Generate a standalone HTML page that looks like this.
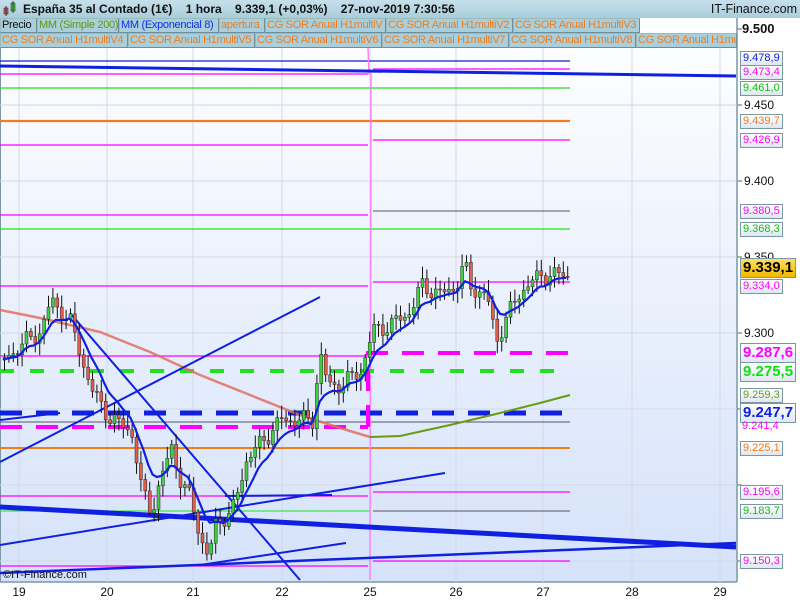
<!DOCTYPE html><html><head><meta charset="utf-8"><style>
*{margin:0;padding:0;box-sizing:border-box}
body{width:800px;height:600px;overflow:hidden;background:#fff;font-family:"Liberation Sans",sans-serif;position:relative}
#hdr{position:absolute;left:0;top:0;width:800px;height:18px;background:linear-gradient(#c6e0ea,#a9cddb);font-size:12px;font-weight:bold;color:#111}
#hdr span{position:absolute;top:2px}
.tab{position:absolute;height:15px;font-size:11px;letter-spacing:-0.3px;color:#f07d1e;background:#a9cfdc;border:1px solid #88a;border-color:#9bb #6d8e9a #6d8e9a #9bb;padding:0 1px;line-height:13px;white-space:nowrap;overflow:hidden}
#ax{position:absolute;left:737px;top:18px;width:63px;height:582px;background:#fff}
.lb{position:absolute;left:740px;font-size:11px;height:15px;line-height:13px;padding:0 2px;border:1px solid #7a97a5;background:linear-gradient(#fff,#dfe8f0)}
.big{font-size:15px;font-weight:bold;height:20px;line-height:18px}
</style></head><body>
<div id="hdr">
<svg style="position:absolute;left:3px;top:1px" width="14" height="16"><rect x="1" y="7" width="4" height="6" fill="#e05050" stroke="#333" stroke-width=".6"/><line x1="3" y1="5" x2="3" y2="15" stroke="#333"/><rect x="8" y="2" width="4" height="8" fill="#40d040" stroke="#333" stroke-width=".6"/><line x1="10" y1="0" x2="10" y2="12" stroke="#333"/></svg>
<span style="left:23px">España 35 al Contado (1€)&nbsp;&nbsp;&nbsp; 1 hora&nbsp;&nbsp;&nbsp; 9.339,1 (+0,03%)&nbsp;&nbsp;&nbsp; 27-nov-2019 7:30:56</span>
<span style="right:3px;font-weight:normal;font-size:12.5px">IT-Finance.com</span>
</div>
<div id="ax"></div>
<svg style="position:absolute;left:0;top:18px" width="800" height="582" viewBox="0 18 800 582">
<defs><linearGradient id="g" x1="0" y1="0" x2="0" y2="1"><stop offset="0" stop-color="#ffffff"/><stop offset="1" stop-color="#d5e2fa"/></linearGradient></defs>
<rect x="0" y="18" width="737" height="564" fill="url(#g)"/>
<line x1="0.5" y1="18" x2="0.5" y2="582" stroke="#7a97a5"/>
<line x1="737" y1="18" x2="737" y2="582" stroke="#7a97a5" stroke-width="1.5"/>
<line x1="0" y1="582" x2="737" y2="582" stroke="#7a97a5" stroke-width="1.5"/>
<g stroke="#d4d8e4" stroke-width="1">
<line x1="0" y1="105" x2="737" y2="105"/><line x1="0" y1="181" x2="737" y2="181"/><line x1="0" y1="257" x2="737" y2="257"/><line x1="0" y1="333" x2="737" y2="333"/><line x1="0" y1="409" x2="737" y2="409"/><line x1="0" y1="485" x2="737" y2="485"/><line x1="0" y1="561" x2="737" y2="561"/>
<line x1="19" y1="48" x2="19" y2="582"/><line x1="107" y1="48" x2="107" y2="582"/><line x1="193" y1="48" x2="193" y2="582"/><line x1="282" y1="48" x2="282" y2="582"/><line x1="370" y1="48" x2="370" y2="582"/><line x1="456" y1="48" x2="456" y2="582"/><line x1="543" y1="48" x2="543" y2="582"/><line x1="632" y1="48" x2="632" y2="582"/><line x1="720" y1="48" x2="720" y2="582"/>
</g>
<g stroke="#666" stroke-width="1">
<line x1="737" y1="29" x2="742" y2="29"/><line x1="737" y1="105" x2="742" y2="105"/><line x1="737" y1="181" x2="742" y2="181"/><line x1="737" y1="257" x2="742" y2="257"/><line x1="737" y1="333" x2="742" y2="333"/><line x1="737" y1="409" x2="742" y2="409"/><line x1="737" y1="485" x2="742" y2="485"/><line x1="737" y1="561" x2="742" y2="561"/>
</g>
<g fill="none">
<line x1="0" y1="61" x2="570" y2="61" stroke="#1020c0" stroke-width="1.3"/>
<line x1="0" y1="74" x2="368" y2="74" stroke="#f0f" stroke-width="1.3"/>
<line x1="373" y1="69" x2="570" y2="69" stroke="#f0f" stroke-width="1.3"/>
<line x1="0" y1="88" x2="570" y2="88" stroke="#20e020" stroke-width="1.3"/>
<line x1="0" y1="121" x2="570" y2="121" stroke="#f07d1e" stroke-width="2.2"/>
<line x1="0" y1="145" x2="368" y2="145" stroke="#f0f" stroke-width="1.3"/>
<line x1="373" y1="140" x2="570" y2="140" stroke="#f0f" stroke-width="1.3"/>
<line x1="0" y1="215" x2="368" y2="215" stroke="#f0f" stroke-width="1.3"/>
<line x1="373" y1="211" x2="570" y2="211" stroke="#556" stroke-width="1"/>
<line x1="0" y1="229" x2="570" y2="229" stroke="#20e020" stroke-width="1.3"/>
<line x1="0" y1="286" x2="368" y2="286" stroke="#f0f" stroke-width="1.3"/>
<line x1="373" y1="282" x2="570" y2="282" stroke="#f0f" stroke-width="1.3"/>
<line x1="0" y1="356" x2="368" y2="356" stroke="#f0f" stroke-width="1.3"/>
<line x1="0" y1="448" x2="570" y2="448" stroke="#f07d1e" stroke-width="2"/>
<line x1="0" y1="496" x2="368" y2="496" stroke="#f0f" stroke-width="1.3"/>
<line x1="373" y1="492" x2="570" y2="492" stroke="#f0f" stroke-width="1.3"/>
<line x1="0" y1="511" x2="370" y2="511" stroke="#20e020" stroke-width="1"/>
<line x1="373" y1="511" x2="570" y2="511" stroke="#556" stroke-width="1"/>
<line x1="0" y1="566" x2="368" y2="566" stroke="#f0f" stroke-width="1.3"/>
<line x1="373" y1="561" x2="570" y2="561" stroke="#f0f" stroke-width="1.3"/>
<line x1="0" y1="422" x2="570" y2="422" stroke="#556" stroke-width="1"/>
<polyline points="368,48 369,74 371,74 370,580" stroke="#ff80ff" stroke-width="1.5"/>
<line x1="0" y1="371" x2="570" y2="371" stroke="#20e020" stroke-width="4" stroke-dasharray="14,16"/>
<line x1="0" y1="413" x2="570" y2="413" stroke="#1020e0" stroke-width="5" stroke-dasharray="22,14"/>
<line x1="0" y1="427" x2="368" y2="427" stroke="#f0f" stroke-width="4" stroke-dasharray="22,14"/>
<polyline points="368,427 368,353 570,353" stroke="#f0f" stroke-width="4" stroke-dasharray="22,14"/>
<polyline points="0,310 40,318 100,332 150,352 200,375 250,395 300,415 340,428 370,437" stroke="#e07060" stroke-width="2.5" opacity=".85"/>
<polyline points="370,437 400,436 450,425 500,413 540,403 570,395" stroke="#6a9a10" stroke-width="2"/>
<line x1="0" y1="66" x2="736" y2="76" stroke="#1020e0" stroke-width="3"/>
<line x1="0" y1="507" x2="736" y2="547" stroke="#1020e0" stroke-width="5"/>
<line x1="0" y1="462" x2="320" y2="297" stroke="#1020e0" stroke-width="2"/>
<line x1="70" y1="313" x2="300" y2="580" stroke="#1020e0" stroke-width="2"/>
<line x1="0" y1="545" x2="445" y2="473" stroke="#1020e0" stroke-width="2"/>
<line x1="0" y1="573" x2="736" y2="543" stroke="#1020e0" stroke-width="2.5"/>
<line x1="200" y1="565" x2="346" y2="543" stroke="#1020e0" stroke-width="2"/>
<line x1="0" y1="420" x2="60" y2="413" stroke="#1020e0" stroke-width="2"/>
<line x1="225" y1="496" x2="332" y2="495" stroke="#1020e0" stroke-width="2"/>
<g id="cd"></g>
<polyline id="ema" stroke="#1020e0" stroke-width="2.2"/>
</g>
<g font-size="12" fill="#111" font-family="Liberation Sans">
<text x="742" y="33" font-weight="bold" font-size="13">9.500</text>
<text x="744" y="109">9.450</text><text x="744" y="185">9.400</text><text x="744" y="261">9.350</text><text x="744" y="337">9.300</text>
<text x="3" y="578" font-size="11">©IT-Finance.com</text>
</g>
<g font-size="12" fill="#111" text-anchor="middle">
<text x="19" y="596">19</text><text x="107" y="596">20</text><text x="193" y="596">21</text><text x="282" y="596">22</text><text x="370" y="596">25</text><text x="456" y="596">26</text><text x="543" y="596">27</text><text x="632" y="596">28</text><text x="720" y="596">29</text>
</g>
</svg>
<div class="tab" style="left:0;top:18px;width:37px;color:#111">Precio</div>
<div class="tab" style="left:37px;top:18px;width:82px;color:#5a9a10">MM (Simple 200)</div>
<div class="tab" style="left:119px;top:18px;width:100px;color:#1030e0">MM (Exponencial 8)</div>
<div class="tab" style="left:219px;top:18px;width:46px">apertura</div>
<div class="tab" style="left:265px;top:18px;width:121px">CG SOR Anual H1multiV</div>
<div class="tab" style="left:386px;top:18px;width:127px">CG SOR Anual H1multiV2</div>
<div class="tab" style="left:513px;top:18px;width:127px">CG SOR Anual H1multiV3</div>
<div class="tab" style="left:0;top:33px;width:128px">CG SOR Anual H1multiV4</div>
<div class="tab" style="left:128px;top:33px;width:127px">CG SOR Anual H1multiV5</div>
<div class="tab" style="left:255px;top:33px;width:127px">CG SOR Anual H1multiV6</div>
<div class="tab" style="left:382px;top:33px;width:127px">CG SOR Anual H1multiV7</div>
<div class="tab" style="left:509px;top:33px;width:127px">CG SOR Anual H1multiV8</div>
<div class="tab" style="left:636px;top:33px;width:101px">CG SOR Anual H1mu</div>
<div class="lb" style="top:51px;color:#1020e0">9.478,9</div>
<div class="lb" style="top:65px;color:#f0f">9.473,4</div>
<div class="lb" style="top:81px;color:#10c010">9.461,0</div>
<div class="lb" style="top:114px;color:#f07d1e">9.439,7</div>
<div class="lb" style="top:133px;color:#f0f">9.426,9</div>
<div class="lb" style="top:204px;color:#f0f">9.380,5</div>
<div class="lb" style="top:222px;color:#10c010">9.368,3</div>
<div class="lb big" style="top:258px;background:linear-gradient(#ffe060,#f0b800);color:#000">9.339,1</div>
<div class="lb" style="top:279px;color:#f0f">9.334,0</div>
<div class="lb big" style="top:343px;color:#f0f">9.287,6</div>
<div class="lb big" style="top:362px;color:#10e010">9.275,5</div>
<div class="lb" style="top:388px;color:#6a9a10">9.259,3</div>
<div class="lb big" style="top:403px;color:#1020e0">9.247,7</div>
<div class="lb" style="top:420px;color:#f0f;border:none;background:none">9.241,4</div>
<div class="lb" style="top:441px;color:#f07d1e">9.225,1</div>
<div class="lb" style="top:485px;color:#f0f">9.195,6</div>
<div class="lb" style="top:504px;color:#10c010">9.183,7</div>
<div class="lb" style="top:554px;color:#f0f">9.150,3</div>
<script>
var k=[[2,360],[20,345],[40,330],[50,300],[58,310],[68,320],[78,350],[90,390],[110,420],[130,430],[140,490],[150,510],[160,480],[170,445],[180,485],[190,500],[200,540],[207,560],[215,520],[230,515],[245,460],[262,440],[280,420],[300,420],[312,420],[318,350],[326,385],[340,385],[360,370],[372,330],[390,325],[410,310],[420,285],[440,295],[455,285],[463,265],[470,288],[485,295],[495,340],[505,318],[520,290],[540,275],[570,275]];
function Y(x){for(var i=1;i<k.length;i++){if(x<=k[i][0]){var a=k[i-1],b=k[i];return a[1]+(b[1]-a[1])*(x-a[0])/(b[0]-a[0]);}}return 275;}
var s='',e=[],ema=Y(2),prev=Y(2);
for(var x=3;x<=570;x+=4.4){var n=Math.sin(x*1.7)*6+Math.sin(x*.43)*4;var c=Y(x)+n;var o=prev;var hi=Math.min(o,c)-3-Math.abs(Math.sin(x*3.1))*9,lo=Math.max(o,c)+3+Math.abs(Math.cos(x*2.3))*9;
s+='<line x1="'+(x+1.5)+'" y1="'+hi+'" x2="'+(x+1.5)+'" y2="'+lo+'" stroke="#111" stroke-width="1"/>';
s+='<rect x="'+x+'" y="'+Math.min(o,c)+'" width="3" height="'+Math.max(1,Math.abs(c-o))+'" fill="'+(c<o?'#40d040':'#e06050')+'" stroke="#222" stroke-width=".5"/>';
ema=ema+(c-ema)*2/9;e.push(x+','+ema.toFixed(1));prev=c;}
document.getElementById('cd').innerHTML=s;document.getElementById('ema').setAttribute('points',e.join(' '));
</script>
</body></html>
